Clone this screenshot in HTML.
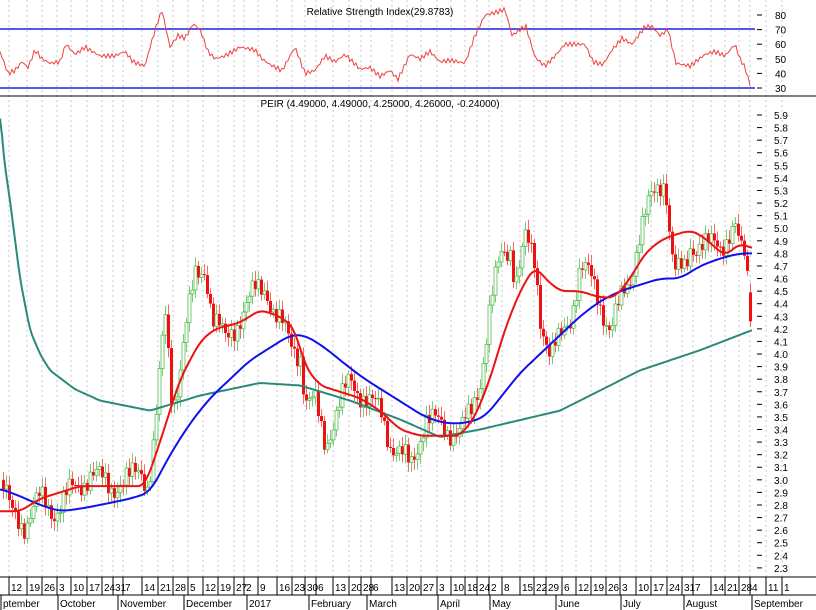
<!DOCTYPE html>
<html><head><meta charset="utf-8"><style>
html,body{margin:0;padding:0;background:#fff;}
svg{display:block;font-family:"Liberation Sans Narrow","Liberation Sans",sans-serif;}
</style></head><body>
<svg id="s" width="816" height="610" viewBox="0 0 816 610" xmlns="http://www.w3.org/2000/svg">
<rect width="816" height="610" fill="#fff"/>
<g id="grid"></g>
<text x="380" y="15" font-size="10" text-anchor="middle" fill="#000">Relative Strength Index(29.8783)</text>
<line x1="0" y1="29" x2="755" y2="29" stroke="#2020e0" stroke-width="1.5"/>
<line x1="0" y1="88" x2="755" y2="88" stroke="#2020e0" stroke-width="1.5"/>
<line x1="0" y1="96" x2="816" y2="96" stroke="#000" stroke-width="1"/>
<text x="380" y="107" font-size="10" text-anchor="middle" fill="#000">PEIR (4.49000, 4.49000, 4.25000, 4.26000, -0.24000)</text>
<g id="rsi"></g>
<g id="candles"></g>
<g id="ma"></g>
<g id="axis" font-size="10" fill="#000"></g>
<line x1="0" y1="577" x2="816" y2="577" stroke="#000"/>
<line x1="0" y1="595" x2="816" y2="595" stroke="#000"/>
</svg>
<script>
var NS="http://www.w3.org/2000/svg";
function el(p,t,a){var e=document.createElementNS(NS,t);for(var k in a)e.setAttribute(k,a[k]);p.appendChild(e);return e;}
function interp(pts,x){if(x<=pts[0][0])return pts[0][1];for(var i=1;i<pts.length;i++){if(x<=pts[i][0]){var a=pts[i-1],b=pts[i];return a[1]+(b[1]-a[1])*(x-a[0])/(b[0]-a[0]);}}return pts[pts.length-1][1];}
function smooth(pts,x,r){var s=0,n=0;for(var d=-r;d<=r;d+=2){s+=interp(pts,x+d);n++;}return s/n;}
function py(p){return 115+(5.9-p)*125.8;}
function ry(v){return 88-(v-30)*1.46;}
var ticks=[[13,"12"],[31,"19"],[46,"26"],[61,"3"],[75,"10"],[91,"17"],[106,"24"],[117,"31"],[127,"7"],[146,"14"],[162,"21"],[177,"28"],[192,"5"],[207,"12"],[222,"19"],[238,"27"],[248,"2"],[262,"9"],[281,"16"],[296,"23"],[309,"30"],[320,"6"],[337,"13"],[353,"20"],[365,"28"],[375,"6"],[396,"13"],[411,"20"],[425,"27"],[441,"3"],[455,"10"],[469,"18"],[481,"24"],[493,"2"],[506,"8"],[524,"15"],[538,"22"],[550,"29"],[566,"6"],[580,"12"],[595,"19"],[610,"26"],[624,"3"],[640,"10"],[655,"17"],[671,"24"],[686,"31"],[697,"7"],[715,"14"],[729,"21"],[743,"28"],[754,"4"],[770,"11"],[786,"1"]];
var g=document.getElementById("grid"),ax=document.getElementById("axis");
ticks.forEach(function(t){var x=t[0]-4;el(g,"line",{x1:x,y1:0,x2:x,y2:577,stroke:"#c8c8c8","stroke-dasharray":"2,3","stroke-width":1});
el(ax,"line",{x1:x,y1:577,x2:x,y2:595,stroke:"#000"});var tx=el(ax,"text",{x:x+2,y:591});tx.textContent=t[1];});
var months=[[0,"ptember"],[57,"October"],[117,"November"],[183,"December"],[246,"2017"],[308,"February"],[366,"March"],[437,"April"],[489,"May"],[555,"June"],[620,"July"],[683,"August"],[751,"September"]];
months.forEach(function(m){el(ax,"line",{x1:m[0]+1,y1:595,x2:m[0]+1,y2:610,stroke:"#000"});var t=el(ax,"text",{x:m[0]+3,y:607});t.textContent=m[1];});
for(var v=30;v<=80;v+=10){var y=ry(v);el(ax,"line",{x1:757,y1:y,x2:762,y2:y,stroke:"#000"});var t=el(ax,"text",{x:775,y:y+4});t.textContent=v;}
for(var i=0;i<=36;i++){var p=2.3+i*0.1;var y=py(p);el(ax,"line",{x1:757,y1:y,x2:762,y2:y,stroke:"#000"});var t=el(ax,"text",{x:774,y:y+4,"font-size":10});t.textContent=p.toFixed(1);}
var R=[[0,55],[8,40],[15,42],[22,48],[28,44],[35,56],[42,50],[50,47],[60,48],[66,60],[75,53],[85,58],[100,52],[115,52],[125,55],[133,48],[145,45],[150,58],[157,74],[162,83],[170,58],[178,66],[185,64],[193,74],[200,70],[208,55],[215,50],[225,52],[240,58],[255,56],[262,50],[270,46],[282,42],[295,58],[305,40],[315,42],[325,52],[335,48],[345,53],[360,43],[370,44],[380,38],[390,42],[398,36],[410,53],[420,50],[430,55],[440,48],[450,49],[465,47],[475,66],[485,80],[497,82],[505,84],[512,66],[520,70],[526,72],[535,51],[545,45],[555,52],[565,60],[575,60],[585,60],[593,48],[603,46],[612,56],[622,64],[632,60],[645,72],[652,72],[660,66],[668,70],[676,47],[690,45],[705,53],[715,55],[725,52],[735,60],[740,50],[745,44],[751,30]];
var s="";for(var x=0;x<=751;x+=2){var v=interp(R,x)+Math.sin(x*1.7)*1.5;s+=x+","+ry(v).toFixed(1)+" ";}
el(document.getElementById("rsi"),"polyline",{points:s,fill:"none",stroke:"#f04040","stroke-width":1});
var P=[[0,3.0],[10,2.75],[25,2.65],[40,2.85],[55,2.75],[70,2.9],[90,3.05],[110,2.95],[130,3.0],[140,3.1],[148,2.95],[155,3.4],[160,3.9],[165,4.3],[172,3.6],[178,3.8],[185,4.2],[195,4.6],[205,4.7],[212,4.3],[225,4.1],[240,4.3],[255,4.5],[265,4.55],[275,4.3],[290,4.1],[300,4.0],[305,3.6],[315,3.6],[325,3.3],[335,3.5],[350,3.8],[360,3.7],[370,3.6],[380,3.55],[390,3.3],[400,3.2],[410,3.1],[418,3.3],[425,3.5],[435,3.45],[445,3.4],[460,3.4],[470,3.5],[480,3.8],[490,4.4],[500,4.75],[510,4.85],[515,4.6],[525,4.9],[535,4.7],[540,4.3],[550,4.0],[560,4.1],[570,4.3],[580,4.7],[590,4.6],[600,4.4],[610,4.2],[620,4.4],[630,4.6],[640,5.0],[650,5.2],[660,5.35],[665,5.4],[670,4.9],[675,4.65],[685,4.65],[690,4.85],[700,4.9],[710,4.85],[720,4.85],[730,5.0],[735,5.02],[740,4.8],[745,4.75],[748,4.5],[752,4.3]];
var cg=document.getElementById("candles"),prev=interp(P,0);
for(var x=3;x<=752;x+=3){var c=interp(P,x)+Math.sin(x*2.3)*0.08+Math.cos(x*0.9)*0.05;var o=prev;if(x>=749){o=4.49;c=4.26;}
var hi=Math.max(o,c)+0.03+Math.abs(Math.sin(x*1.3))*0.05,lo=Math.min(o,c)-0.03-Math.abs(Math.cos(x*1.1))*0.05;
var up=c>=o,col=up?"#55bb55":"#ee1111";
el(cg,"line",{x1:x+0.5,y1:py(hi),x2:x+0.5,y2:py(lo),stroke:up?"#77cc77":"#ff6666","stroke-width":1});
var yt=py(Math.max(o,c)),h=Math.max(1,py(Math.min(o,c))-yt);
el(cg,"rect",{x:x-1,y:yt,width:3,height:h,fill:up?"#fff":"#ee1111",stroke:col,"stroke-width":up?0.8:0});
prev=c;}
function line(pts,col,w,r){var s="";for(var x=pts[0][0];x<=752;x+=2)s+=x+","+py(smooth(pts,x,r)).toFixed(1)+" ";el(document.getElementById("ma"),"polyline",{points:s,fill:"none",stroke:col,"stroke-width":w});}
line([[0,5.95],[3,5.6],[10,5.22],[20,4.6],[30,4.19],[40,4.0],[50,3.87],[75,3.72],[100,3.63],[150,3.55],[200,3.67],[260,3.77],[300,3.75],[350,3.63],[400,3.48],[440,3.34],[480,3.4],[560,3.55],[640,3.87],[700,4.03],[752,4.19]],"#2a8a7a",2,2);
line([[0,2.93],[20,2.87],[40,2.8],[60,2.75],[80,2.77],[100,2.8],[130,2.85],[150,2.9],[170,3.2],[190,3.45],[210,3.65],[230,3.8],[250,3.95],[270,4.05],[290,4.15],[305,4.15],[325,4.05],[345,3.92],[365,3.8],[385,3.7],[405,3.6],[425,3.5],[445,3.45],[465,3.45],[485,3.5],[500,3.65],[520,3.85],[540,4.0],[560,4.15],[580,4.3],[600,4.42],[620,4.5],[640,4.55],[660,4.6],[680,4.6],[700,4.7],[720,4.76],[740,4.8],[752,4.8]],"#1010ee",2,8);
line([[0,2.75],[20,2.75],[40,2.85],[80,2.95],[120,2.95],[145,2.95],[160,3.3],[180,3.8],[200,4.1],[215,4.2],[240,4.25],[260,4.35],[280,4.3],[295,4.2],[305,3.9],[320,3.75],[340,3.7],[360,3.65],[380,3.55],[400,3.4],[420,3.35],[440,3.35],[460,3.35],[475,3.5],[490,3.8],[505,4.2],[520,4.5],[535,4.7],[545,4.6],[560,4.5],[580,4.5],[600,4.45],[615,4.45],[630,4.6],[645,4.8],[660,4.9],[675,4.95],[690,4.98],[700,4.95],[715,4.85],[725,4.78],[740,4.88],[752,4.84]],"#ee1111",2,6);
</script>
</body></html>
